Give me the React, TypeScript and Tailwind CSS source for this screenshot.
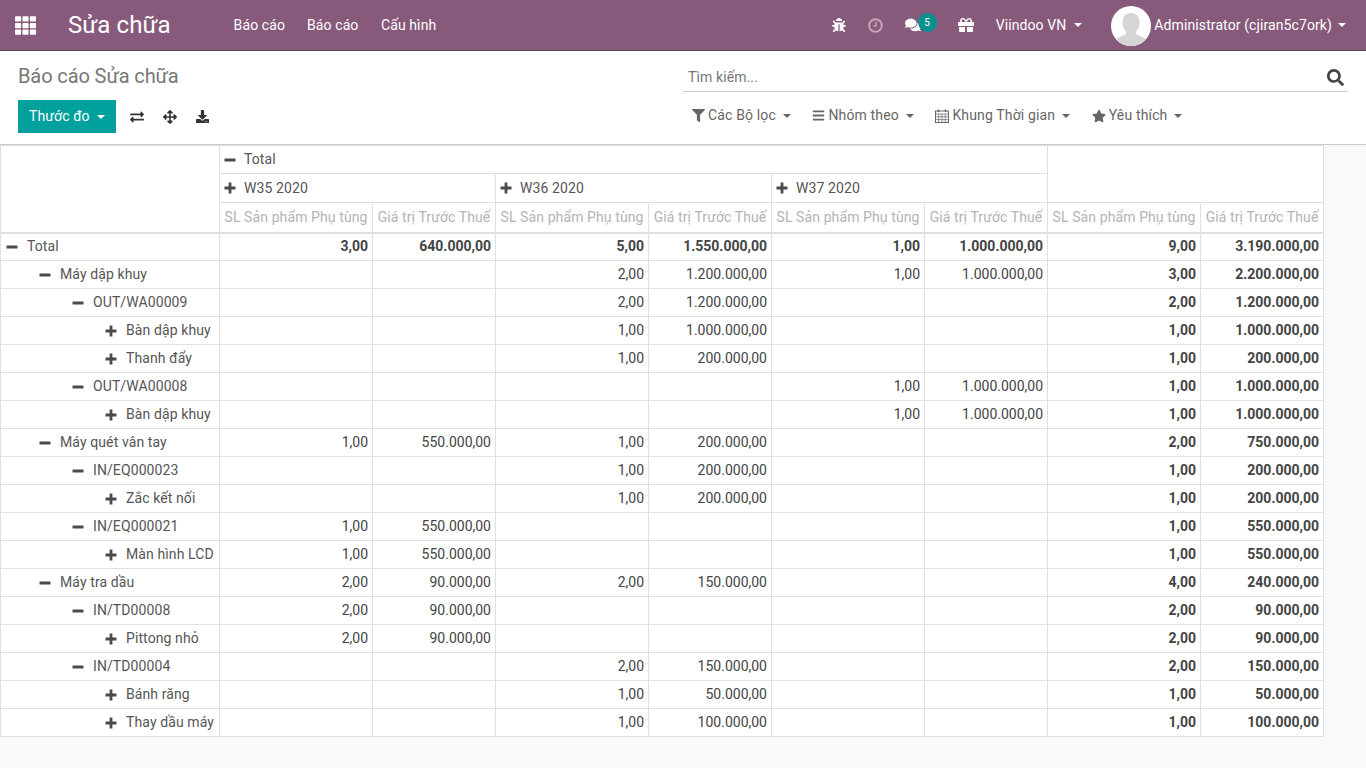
import type { ReactNode } from "react";
import {
  FaArrowsAlt,
  FaBars,
  FaBug,
  FaComments,
  FaDownload,
  FaExchangeAlt,
  FaFilter,
  FaGift,
  FaSearch,
  FaStar,
  FaTh,
} from "react-icons/fa";

type Row = {
  label: string;
  level: number;
  open: boolean;
  bold?: boolean;
  values: string[];
};

const ROWS: Row[] = [
  { label: "Total", level: 0, open: true, bold: true, values: ["3,00", "640.000,00", "5,00", "1.550.000,00", "1,00", "1.000.000,00", "9,00", "3.190.000,00"] },
  { label: "Máy dập khuy", level: 1, open: true, values: ["", "", "2,00", "1.200.000,00", "1,00", "1.000.000,00", "3,00", "2.200.000,00"] },
  { label: "OUT/WA00009", level: 2, open: true, values: ["", "", "2,00", "1.200.000,00", "", "", "2,00", "1.200.000,00"] },
  { label: "Bàn dập khuy", level: 3, open: false, values: ["", "", "1,00", "1.000.000,00", "", "", "1,00", "1.000.000,00"] },
  { label: "Thanh đẩy", level: 3, open: false, values: ["", "", "1,00", "200.000,00", "", "", "1,00", "200.000,00"] },
  { label: "OUT/WA00008", level: 2, open: true, values: ["", "", "", "", "1,00", "1.000.000,00", "1,00", "1.000.000,00"] },
  { label: "Bàn dập khuy", level: 3, open: false, values: ["", "", "", "", "1,00", "1.000.000,00", "1,00", "1.000.000,00"] },
  { label: "Máy quét vân tay", level: 1, open: true, values: ["1,00", "550.000,00", "1,00", "200.000,00", "", "", "2,00", "750.000,00"] },
  { label: "IN/EQ000023", level: 2, open: true, values: ["", "", "1,00", "200.000,00", "", "", "1,00", "200.000,00"] },
  { label: "Zắc kết nối", level: 3, open: false, values: ["", "", "1,00", "200.000,00", "", "", "1,00", "200.000,00"] },
  { label: "IN/EQ000021", level: 2, open: true, values: ["1,00", "550.000,00", "", "", "", "", "1,00", "550.000,00"] },
  { label: "Màn hình LCD", level: 3, open: false, values: ["1,00", "550.000,00", "", "", "", "", "1,00", "550.000,00"] },
  { label: "Máy tra dầu", level: 1, open: true, values: ["2,00", "90.000,00", "2,00", "150.000,00", "", "", "4,00", "240.000,00"] },
  { label: "IN/TD00008", level: 2, open: true, values: ["2,00", "90.000,00", "", "", "", "", "2,00", "90.000,00"] },
  { label: "Pittong nhỏ", level: 3, open: false, values: ["2,00", "90.000,00", "", "", "", "", "2,00", "90.000,00"] },
  { label: "IN/TD00004", level: 2, open: true, values: ["", "", "2,00", "150.000,00", "", "", "2,00", "150.000,00"] },
  { label: "Bánh răng", level: 3, open: false, values: ["", "", "1,00", "50.000,00", "", "", "1,00", "50.000,00"] },
  { label: "Thay dầu máy", level: 3, open: false, values: ["", "", "1,00", "100.000,00", "", "", "1,00", "100.000,00"] },
];

const WEEKS = ["W35 2020", "W36 2020", "W37 2020"];
const INDENT = ["pl-[5px]", "pl-[38px]", "pl-[71px]", "pl-[104px]"];
const COLS = [219, 153, 123, 153, 123, 153, 123, 153, 123];

// bootstrap style caret, not the font icon
const Caret = ({ className = "" }: { className?: string }) => (
  <span
    className={`inline-block w-0 h-0 border-x-[4px] border-t-[4px] border-x-transparent border-t-current ${className}`}
  />
);

// the fa4 plus and minus are heavier than the ones in the icon packages
const ToggleIcon = ({ open }: { open: boolean }) => (
  <svg viewBox="0 0 12 12" className="w-[12px] h-[12px] shrink-0 text-[#4a4a4a]" fill="currentColor">
    {open ? (
      <rect x="0.500" y="4.600" width="11" height="2.800" rx="0.500" />
    ) : (
      <path d="M4.600 0.500h2.800v4.100h4.100v2.800H7.400v4.100H4.600V7.400H0.500V4.600h4.100z" />
    )}
  </svg>
);

function Avatar() {
  return (
    <svg viewBox="0 0 40 40" className="w-10 h-10 rounded-full shrink-0 mt-[1px]">
      <rect width="40" height="40" fill="#fff" />
      <path
        d="M20 7c-5.500 0-8.500 4-8.500 9.500 0 4 1.500 7 3.500 9v2.500c-4 2-8.500 3-11 7 3.500 3 9.500 5 16 5s12.500-2 16-5c-2.500-4-7-5-11-7v-2.500c2-2 3.500-5 3.500-9C28.500 11 25.500 7 20 7z"
        fill="#d5d5d5"
      />
    </svg>
  );
}

function ClockIcon() {
  return (
    <svg viewBox="0 0 15 15" className="ml-[22px] w-[15px] h-[15px] shrink-0 text-[#c4a5ba]" fill="none" stroke="currentColor">
      <circle cx="7.500" cy="7.500" r="6.300" strokeWidth="2" />
      <path d="M8 3.800v4.200H5" strokeWidth="1.400" />
    </svg>
  );
}

function CalendarIcon() {
  return (
    <svg viewBox="0 0 14 14" className="w-[14px] h-[14px] shrink-0" fill="none" stroke="currentColor">
      <rect x="0.500" y="2" width="13" height="11.500" strokeWidth="1" />
      <path d="M0.500 5h13M0.500 7.800h13M0.500 10.600h13M3.700 5v8.500M7 5v8.500M10.300 5v8.500" strokeWidth="0.700" />
      <path d="M3.500 0.500v2.500M10.500 0.500v2.500" strokeWidth="1.500" />
    </svg>
  );
}

function Navbar() {
  return (
    <header className="h-[51px] shrink-0 bg-[#875a7b] border-b border-[#5f4a5c] flex items-center text-white">
      <FaTh className="ml-[15px] text-[21px]" />
      <span className="ml-[32px] text-[24px] leading-none">Sửa chữa</span>
      <nav className="ml-[63px] flex gap-[22px] text-[14px]">
        <span>Báo cáo</span>
        <span>Báo cáo</span>
        <span className="ml-[0.5px]">Cấu hình</span>
      </nav>
      <div className="ml-auto flex items-center">
        <FaBug className="text-[14px]" />
        <ClockIcon />
        <div className="relative ml-[22px]">
          <FaComments className="text-[16px]" />
          <span className="absolute -top-[4px] left-[13px] w-[19px] h-[19px] rounded-full bg-[#0a918f] text-[10px] flex items-center justify-center">
            5
          </span>
        </div>
        <FaGift className="ml-[37px] text-[16px]" />
        <span className="ml-[22px] text-[14px]">Viindoo VN</span>
        <Caret className="ml-[8px]" />
        <div className="ml-[29px]">
          <Avatar />
        </div>
        <span className="ml-[3px] text-[14px]">Administrator (cjiran5c7ork)</span>
        <Caret className="ml-[6px] mr-[20px]" />
      </div>
    </header>
  );
}

function FilterButton({ icon, label }: { icon: ReactNode; label: string }) {
  return (
    <span className="flex items-center text-[14px] text-[#666] tracking-[0.15px]">
      {icon}
      <span className="ml-[3px]">{label}</span>
      <Caret className="ml-[7px]" />
    </span>
  );
}

function ControlPanel() {
  return (
    <div className="h-[94px] shrink-0 bg-white flex border-b border-[#ccc] pl-[18px] pr-[18px]">
      <div className="flex-1">
        <h1 className="mt-[13px] text-[20px] leading-[25px] text-[#777] tracking-[-0.1px]">Báo cáo Sửa chữa</h1>
        <div className="mt-[11px] flex items-center text-[#333]">
          <button className="h-[33px] w-[98px] pl-[11px] bg-[#00a09d] text-white text-[14px] flex items-center">
            Thước đo
            <Caret className="ml-[7px]" />
          </button>
          <FaExchangeAlt className="ml-[14px] text-[14px]" />
          <FaArrowsAlt className="ml-[19px] text-[14px]" />
          <FaDownload className="ml-[19px] text-[13px]" />
        </div>
      </div>
      <div className="w-[665px] shrink-0">
        <div className="mt-[12px] h-[29px] border-b border-[#ccc] flex items-center justify-between pl-[5px] pr-[4px]">
          <span className="text-[14px] text-[#777]">Tìm kiếm...</span>
          <FaSearch className="text-[17px] text-[#444]" />
        </div>
        <div className="mt-[13px] flex items-center pl-[9px] gap-[21.5px]">
          <FilterButton icon={<FaFilter className="text-[13px]" />} label="Các Bộ lọc" />
          <FilterButton icon={<FaBars className="text-[13px]" />} label="Nhóm theo" />
          <FilterButton icon={<CalendarIcon />} label="Khung Thời gian" />
          <FilterButton icon={<FaStar className="text-[14px]" />} label="Yêu thích" />
        </div>
      </div>
    </div>
  );
}

function PivotTable() {
  const border = "border border-[#e0e0e0]";
  const headerCell = `${border} pl-[4px] text-left font-normal text-[#555]`;
  return (
    <table className="table-fixed border-collapse bg-white text-[14px] w-[1324px]">
      <colgroup>
        {COLS.map((w, i) => (
          <col key={i} style={{ width: w }} />
        ))}
      </colgroup>
      <thead>
        <tr className="h-[28px]">
          <th rowSpan={3} className={`${border} border-b-2`} />
          <th colSpan={6} className={headerCell}>
            <span className="flex items-center gap-[8px]">
              <ToggleIcon open />
              Total
            </span>
          </th>
          <th colSpan={2} rowSpan={2} className={border} />
        </tr>
        <tr className="h-[29px]">
          {WEEKS.map((w) => (
            <th key={w} colSpan={2} className={headerCell}>
              <span className="flex items-center gap-[8px]">
                <ToggleIcon open={false} />
                {w}
              </span>
            </th>
          ))}
        </tr>
        <tr className="h-[30px]">
          {COLS.slice(1).map((_, i) => (
            <th
              key={i}
              className={`${border} border-b-2 px-[4px] font-normal text-[#b3b3b3] whitespace-nowrap overflow-hidden text-center`}
            >
              {i % 2 === 0 ? "SL Sản phẩm Phụ tùng" : "Giá trị Trước Thuế"}
            </th>
          ))}
        </tr>
      </thead>
      <tbody>
        {ROWS.map((row, r) => (
          <tr key={r} className="h-[28px]">
            <td className={`${border} ${INDENT[row.level]} text-[#555] whitespace-nowrap`}>
              <span className="flex items-center gap-[9px]">
                <ToggleIcon open={row.open} />
                {row.label}
              </span>
            </td>
            {row.values.map((v, c) => (
              <td
                key={c}
                className={`${border} px-[4px] text-right text-[#444] tracking-normal ${row.bold || c >= 6 ? "font-bold" : ""}`}
              >
                {v}
              </td>
            ))}
          </tr>
        ))}
      </tbody>
    </table>
  );
}

export default function App() {
  return (
    <div className="h-[768px] overflow-hidden flex flex-col bg-[#f9f9f9] tracking-[0.1px] font-['Roboto',sans-serif]">
      <Navbar />
      <ControlPanel />
      <PivotTable />
    </div>
  );
}
